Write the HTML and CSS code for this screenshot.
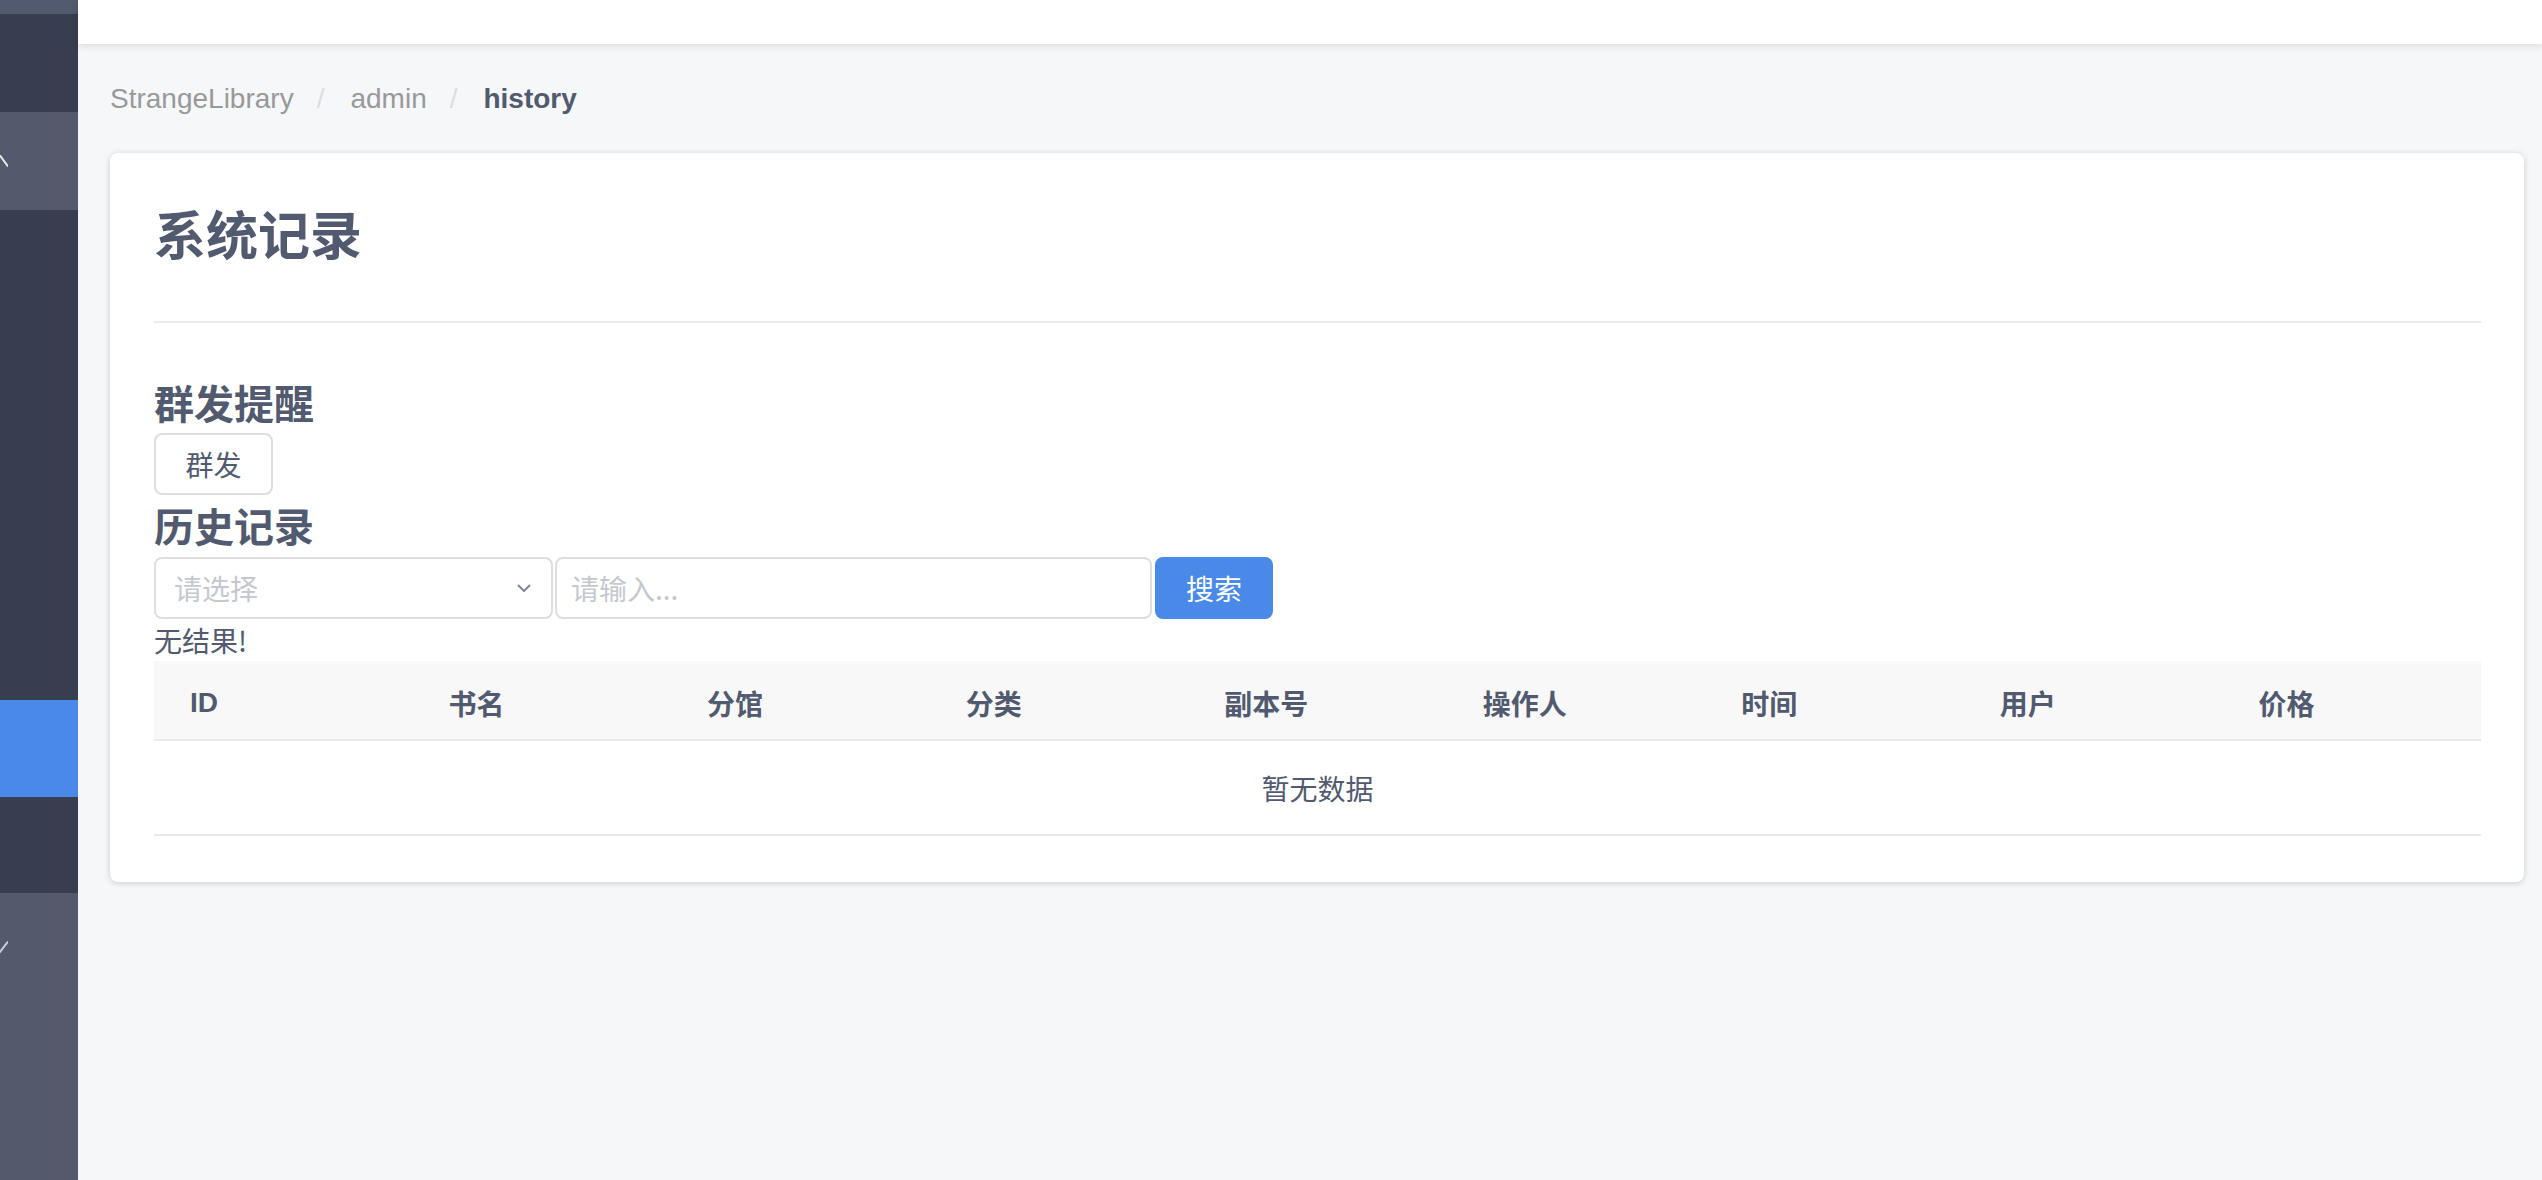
FILE: index.html
```html
<!DOCTYPE html>
<html lang="zh-CN">
<head>
<meta charset="utf-8">
<title>history</title>
<link rel="stylesheet" href="styles.css">
</head>
<body>
<div class="layout">
  <aside class="sidebar">
    <div class="sb-strip"></div>
    <div class="sb-dark sb-h98"></div>
    <div class="sb-light sb-h98 sb-open">
      <svg class="sb-chev" width="16" height="12" viewBox="0 0 16 12"><path d="M0 11.5 L8 0.5 L16 11.5" fill="none" stroke="#e6e8ec" stroke-width="2"/></svg>
    </div>
    <div class="sb-dark sb-h490"></div>
    <div class="sb-blue"></div>
    <div class="sb-dark sb-h96"></div>
    <div class="sb-light sb-rest">
      <svg class="sb-chev" width="16" height="12" viewBox="0 0 16 12"><path d="M0 0.5 L8 11 L16 0.5" fill="none" stroke="#c9ccd3" stroke-width="2"/></svg>
    </div>
  </aside>
  <main class="main">
    <header class="topbar"></header>
    <div class="content">
      <nav class="breadcrumb">
        <span class="crumb">StrangeLibrary</span><span class="sep">/</span><span class="crumb">admin</span><span class="sep">/</span><span class="crumb current">history</span>
      </nav>
      <section class="card">
        <h1 class="title">系统记录</h1>
        <div class="divider"></div>
        <h2 class="subtitle first">群发提醒</h2>
        <button class="btn">群发</button>
        <h2 class="subtitle">历史记录</h2>
        <div class="search-row">
          <div class="select">
            <span class="placeholder">请选择</span>
            <svg class="select-arrow" width="14" height="8" viewBox="0 0 14 8"><path d="M1 1 L7 7 L13 1" fill="none" stroke="#808695" stroke-width="2"/></svg>
          </div>
          <div class="input"><span class="placeholder">请输入...</span></div>
          <button class="btn-primary">搜索</button>
        </div>
        <p class="noresult">无结果!</p>
        <table class="table">
          <thead>
            <tr><th>ID</th><th>书名</th><th>分馆</th><th>分类</th><th>副本号</th><th>操作人</th><th>时间</th><th>用户</th><th>价格</th></tr>
          </thead>
          <tbody>
            <tr><td colspan="9" class="empty">暂无数据</td></tr>
          </tbody>
        </table>
      </section>
    </div>
  </main>
</div>
</body>
</html>
```
FILE: styles.css
```css
* { box-sizing: border-box; }
html, body {
  margin: 0;
  padding: 0;
  height: 100%;
}
body {
  font-family: "Liberation Sans", "Noto Sans CJK SC", sans-serif;
  background: #f5f7f9;
  color: #515a6e;
  overflow: hidden;
}
.layout {
  display: flex;
  height: 1180px;
}
.sidebar {
  width: 78px;
  flex: 0 0 78px;
  display: flex;
  flex-direction: column;
  background: #363e4f;
  overflow: hidden;
}
.sb-strip { height: 14px; background: #515a6e; }
.sb-dark { background: #373e4f; }
.sb-light { background: #525a6c; }
.sb-h98 { height: 98px; }
.sb-h490 { height: 490px; }
.sb-h96 { height: 96px; }
.sb-blue { height: 97px; background: #4a89e8; }
.sb-rest { flex: 1; padding-top: 48px; }
.sb-open { padding-top: 43px; }
.sb-chev { display: block; margin-left: -8px; }

.main {
  flex: 1;
  display: flex;
  flex-direction: column;
  min-width: 0;
}
.topbar {
  height: 44px;
  background: #fff;
  box-shadow: 0 2px 8px rgba(0, 0, 0, 0.12);
  position: relative;
  z-index: 1;
}
.content {
  padding: 34px 18px 0 32px;
}
.breadcrumb {
  font-size: 28px;
  line-height: 42px;
  height: 42px;
  color: #999;
  margin-bottom: 33px;
}
.crumb.current {
  color: #515a6e;
  font-weight: bold;
}
.sep {
  color: #dcdee2;
  margin: 0 26px 0 23px;
}
.card {
  background: #fff;
  border-radius: 8px;
  box-shadow: 0 1px 6px rgba(0, 0, 0, 0.18);
  padding: 49px 43px 46px 44px;
}
.title {
  margin: 0;
  font-family: "Noto Sans CJK SC", sans-serif;
  font-size: 52px;
  line-height: 61px;
  font-weight: bold;
  color: #515a6e;
}
.divider {
  height: 2px;
  background: #e8eaec;
  margin: 58px 0 55px;
}
.subtitle {
  margin: 6px 0 0;
  font-family: "Noto Sans CJK SC", sans-serif;
  font-size: 40px;
  line-height: 48px;
  font-weight: bold;
  color: #515a6e;
}
.subtitle.first { margin-top: 0; }
.btn {
  display: block;
  margin-top: 7px;
  width: 119px;
  height: 62px;
  border: 2px solid #dcdee2;
  border-radius: 8px;
  background: #fff;
  color: #515a6e;
  font-family: "Noto Sans CJK SC", sans-serif;
  font-size: 28px;
  padding: 0;
}
.search-row {
  display: flex;
  margin-top: 8px;
  height: 62px;
}
.select {
  width: 399px;
  height: 62px;
  border: 2px solid #dcdee2;
  border-radius: 8px;
  display: flex;
  align-items: center;
  justify-content: space-between;
  padding: 0 20px 0 18px;
}
.select-arrow { display: block; }
.input {
  width: 597px;
  height: 62px;
  margin-left: 2px;
  border: 2px solid #dcdee2;
  border-radius: 8px;
  display: flex;
  align-items: center;
  padding: 0 14px;
}
.placeholder {
  color: #c5c8ce;
  font-family: "Noto Sans CJK SC", sans-serif;
  font-size: 28px;
}
.btn-primary {
  width: 118px;
  height: 62px;
  margin-left: 3px;
  border: none;
  border-radius: 8px;
  background: #4a89e8;
  color: #fff;
  font-family: "Noto Sans CJK SC", sans-serif;
  font-size: 28px;
  padding: 0;
}
.noresult {
  margin: 0;
  font-family: "Noto Sans CJK SC", sans-serif;
  font-size: 28px;
  line-height: 42px;
  color: #515a6e;
}
.table {
  width: 100%;
  border-collapse: collapse;
  table-layout: fixed;
}
.table th {
  height: 79px;
  background: #f8f8f9;
  border-bottom: 2px solid #e8eaec;
  text-align: left;
  padding: 5px 36px 0;
  font-size: 28px;
  font-weight: bold;
  color: #515a6e;
}
.table td.empty {
  height: 95px;
  border-bottom: 2px solid #e8eaec;
  text-align: center;
  font-size: 28px;
  color: #515a6e;
  font-family: "Noto Sans CJK SC", sans-serif;
}
```
